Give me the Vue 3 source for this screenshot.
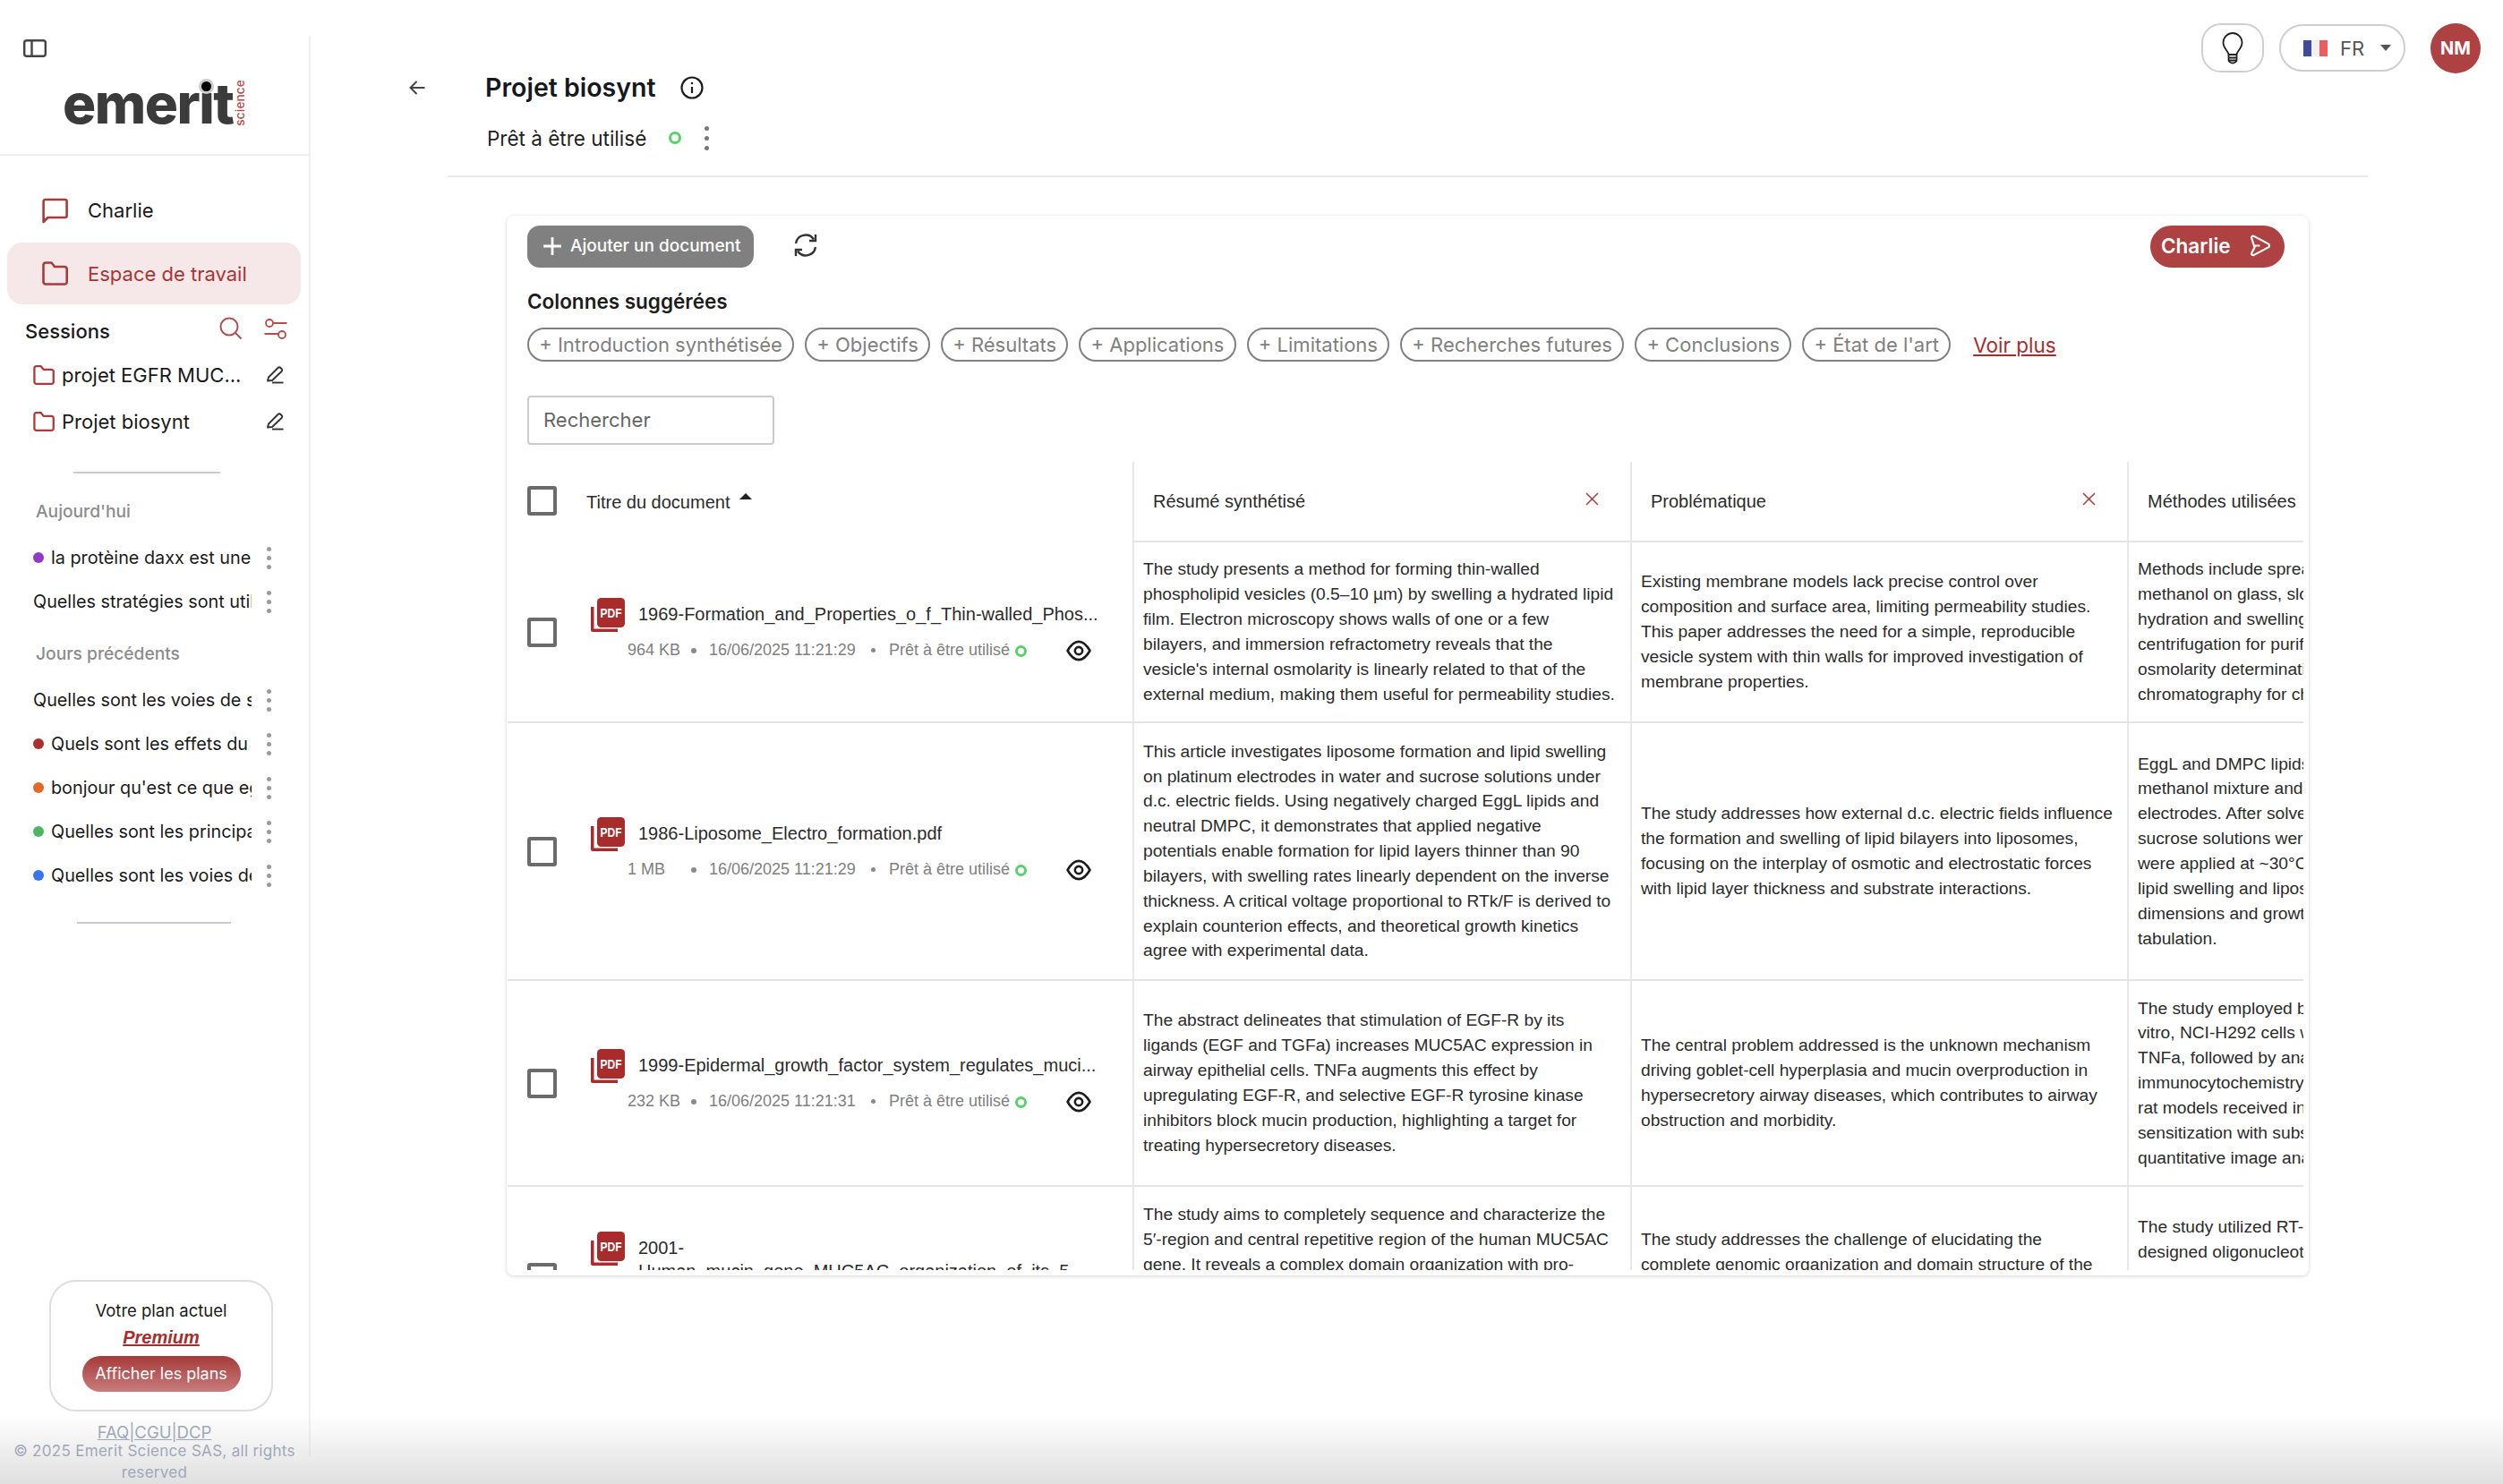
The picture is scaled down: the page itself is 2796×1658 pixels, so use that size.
<script setup>
const todayChats = [
  { text: 'la protèine daxx est une protéine', color: '#9238c8' },
  { text: 'Quelles stratégies sont utilisées', color: '' },
]
const olderChats = [
  { text: 'Quelles sont les voies de signalisation', color: '' },
  { text: 'Quels sont les effets du traitement', color: '#ab2f2f' },
  { text: "bonjour qu'est ce que egfr", color: '#e0692a' },
  { text: 'Quelles sont les principales', color: '#4fb565' },
  { text: 'Quelles sont les voies de', color: '#3b73ee' },
]
const chips = ['Introduction synthétisée', 'Objectifs', 'Résultats', 'Applications', 'Limitations', 'Recherches futures', 'Conclusions', "État de l'art"]
const rows = [
  {
    id: 'r1', h: 202, name: ['1969-Formation_and_Properties_o_f_Thin-walled_Phos...'], size: '964 KB', date: '16/06/2025 11:21:29',
    summary: ['The study presents a method for forming thin-walled', 'phospholipid vesicles (0.5–10 µm) by swelling a hydrated lipid', 'film. Electron microscopy shows walls of one or a few', 'bilayers, and immersion refractometry reveals that the', "vesicle's internal osmolarity is linearly related to that of the", 'external medium, making them useful for permeability studies.'],
    problem: ['Existing membrane models lack precise control over', 'composition and surface area, limiting permeability studies.', 'This paper addresses the need for a simple, reproducible', 'vesicle system with thin walls for improved investigation of', 'membrane properties.'],
    methods: ['Methods include spreading', 'methanol on glass, slow', 'hydration and swelling', 'centrifugation for purification', 'osmolarity determination', 'chromatography for checks'],
  },
  {
    id: 'r2', h: 288, name: ['1986-Liposome_Electro_formation.pdf'], size: '1 MB', date: '16/06/2025 11:21:29',
    summary: ['This article investigates liposome formation and lipid swelling', 'on platinum electrodes in water and sucrose solutions under', 'd.c. electric fields. Using negatively charged EggL lipids and', 'neutral DMPC, it demonstrates that applied negative', 'potentials enable formation for lipid layers thinner than 90', 'bilayers, with swelling rates linearly dependent on the inverse', 'thickness. A critical voltage proportional to RTk/F is derived to', 'explain counterion effects, and theoretical growth kinetics', 'agree with experimental data.'],
    problem: ['The study addresses how external d.c. electric fields influence', 'the formation and swelling of lipid bilayers into liposomes,', 'focusing on the interplay of osmotic and electrostatic forces', 'with lipid layer thickness and substrate interactions.'],
    methods: ['EggL and DMPC lipids in', 'methanol mixture and', 'electrodes. After solvent', 'sucrose solutions were', 'were applied at ~30°C', 'lipid swelling and liposome', 'dimensions and growth', 'tabulation.'],
  },
  {
    id: 'r3', h: 230, name: ['1999-Epidermal_growth_factor_system_regulates_muci...'], size: '232 KB', date: '16/06/2025 11:21:31',
    summary: ['The abstract delineates that stimulation of EGF-R by its', 'ligands (EGF and TGFa) increases MUC5AC expression in', 'airway epithelial cells. TNFa augments this effect by', 'upregulating EGF-R, and selective EGF-R tyrosine kinase', 'inhibitors block mucin production, highlighting a target for', 'treating hypersecretory diseases.'],
    problem: ['The central problem addressed is the unknown mechanism', 'driving goblet-cell hyperplasia and mucin overproduction in', 'hypersecretory airway diseases, which contributes to airway', 'obstruction and morbidity.'],
    methods: ['The study employed both', 'vitro, NCI-H292 cells were', 'TNFa, followed by analysis', 'immunocytochemistry', 'rat models received in', 'sensitization with subsequent', 'quantitative image analysis'],
  },
  {
    id: 'r4', h: 204, name: ['2001-', 'Human_mucin_gene_MUC5AC_organization_of_its_5_...'], size: '1 MB', date: '16/06/2025 11:21:31',
    summary: ['The study aims to completely sequence and characterize the', '5′-region and central repetitive region of the human MUC5AC', 'gene. It reveals a complex domain organization with pro-', 'line', 'line', 'line'],
    problem: ['The study addresses the challenge of elucidating the', 'complete genomic organization and domain structure of the', 'line', 'line'],
    methods: ['The study utilized RT-PCR', 'designed oligonucleotides', 'line', 'line', 'line'],
  },
]
</script>

<template>
  <div class="page">
    <aside class="side">
      <div class="brand">
        <svg class="toggle" width="26" height="20" viewBox="0 0 26 20" fill="none" stroke="#444" stroke-width="2.4">
          <rect x="1.2" y="1.2" width="23.6" height="17.6" rx="2.5" />
          <path d="M9.5 1.2v17.6" />
        </svg>
        <div class="logo">
          <span class="logo-word">emerit<i class="logo-dot"></i></span>
          <span class="logo-sub">science</span>
        </div>
      </div>

      <nav class="nav">
        <a class="nav-item">
          <svg width="29" height="29" viewBox="0 0 29 29" fill="none" stroke="#ab3a3a" stroke-width="2.6">
            <path d="M1.6 27V4a2 2 0 0 1 2-2h22a2 2 0 0 1 2 2v16a2 2 0 0 1-2 2H6.5z" stroke-linejoin="round" />
          </svg>
          <span>Charlie</span>
        </a>
        <a class="nav-item active">
          <svg width="29" height="27" viewBox="0 0 29 27" fill="none" stroke="#ab3a3a" stroke-width="2.6">
            <path d="M1.5 4a2.5 2.5 0 0 1 2.5-2.5h6.5l3.5 4.5h11a2.7 2.7 0 0 1 2.7 2.7V23a2.5 2.5 0 0 1-2.5 2.5H4A2.5 2.5 0 0 1 1.5 23z" stroke-linejoin="round" />
          </svg>
          <span>Espace de travail</span>
        </a>
      </nav>

      <div class="sessions-head">
        <span>Sessions</span>
        <svg class="sh-search" width="26" height="26" viewBox="0 0 26 26" fill="none" stroke="#b84c4c" stroke-width="2">
          <circle cx="11" cy="11" r="9.5" />
          <path d="M18 18l6.5 6.5" />
        </svg>
        <svg class="sh-sliders" width="26" height="24" viewBox="0 0 26 24" fill="none" stroke="#b84c4c" stroke-width="1.8">
          <circle cx="6" cy="5" r="4" />
          <path d="M10 5h15.500M0.500 17h15.500" />
          <circle cx="20" cy="18" r="4" />
        </svg>
      </div>
      <div class="session" v-for="s in ['projet EGFR MUC...', 'Projet biosynt']" :key="s">
        <svg width="24" height="22" viewBox="0 0 29 27" fill="none" stroke="#ab3a3a" stroke-width="2.8">
          <path d="M1.5 4a2.500 2.500 0 0 1 2.500-2.500h6.500l3.500 4.500h11a2.700 2.700 0 0 1 2.700 2.700V23a2.500 2.500 0 0 1-2.500 2.500H4A2.500 2.500 0 0 1 1.500 23z" stroke-linejoin="round" />
        </svg>
        <span class="session-name">{{ s }}</span>
        <svg width="20" height="20" viewBox="0 0 20 20" fill="none" stroke="#333" stroke-width="1.9">
          <path d="M2 16.500l1-4L13.500 2a2 2 0 0 1 3 0l1 1a2 2 0 0 1 0 3L7 16z" stroke-linejoin="round" />
          <path d="M7 18.500h12.500" />
        </svg>
      </div>

      <div class="rule rule-a"></div>
      <div class="group-label">Aujourd'hui</div>
      <div class="chat" v-for="c in todayChats" :key="c.text">
        <i v-if="c.color" class="chat-dot" :style="{ background: c.color }"></i>
        <span class="chat-text">{{ c.text }}</span>
        <span class="kebab"><i></i><i></i><i></i></span>
      </div>
      <div class="group-label later">Jours précédents</div>
      <div class="chat" v-for="c in olderChats" :key="c.text">
        <i v-if="c.color" class="chat-dot" :style="{ background: c.color }"></i>
        <span class="chat-text">{{ c.text }}</span>
        <span class="kebab"><i></i><i></i><i></i></span>
      </div>
      <div class="rule rule-b"></div>

      <div class="plan">
        <div class="plan-title">Votre plan actuel</div>
        <div class="plan-name">Premium</div>
        <button class="plan-btn">Afficher les plans</button>
      </div>
      <div class="legal">
        <a class="legal-links">FAQ|CGU|DCP</a>
        <p>© 2025 Emerit Science SAS, all rights reserved</p>
      </div>
    </aside>

    <main class="main">
      <div class="tools">
        <button class="bulb">
          <svg width="24" height="36" viewBox="0 0 24 36" fill="none" stroke="#222" stroke-width="1.800">
            <path d="M7.500 25c0-4-6-6.500-6-13.500a10.500 10.500 0 0 1 21 0c0 7-6 9.500-6 13.500z" stroke-linejoin="round" />
            <path d="M7.500 25v6.500c0 1 2 3 4.500 3s4.500-2 4.500-3V25M7.500 28.500h9M7.500 31.500h9" />
          </svg>
        </button>
        <button class="lang">
          <span class="flag"><i class="f-b"></i><i class="f-w"></i><i class="f-r"></i></span>
          <span class="lang-code">FR</span>
          <i class="caret"></i>
        </button>
        <div class="avatar">NM</div>
      </div>

      <div class="title-row">
        <svg class="back" width="18" height="18" viewBox="0 0 18 18" fill="none" stroke="#444" stroke-width="2">
          <path d="M17.500 9H1.500M8.500 2L1.500 9l7 7" />
        </svg>
        <h1>Projet biosynt</h1>
        <svg class="info" width="26" height="26" viewBox="0 0 26 26" fill="none" stroke="#1c1c1c" stroke-width="2.200">
          <circle cx="13" cy="13" r="11.500" />
          <path d="M13 12v7" />
          <circle cx="13" cy="8" r="1.300" fill="#1c1c1c" stroke="none" />
        </svg>
      </div>
      <div class="status-row">
        <span>Prêt à être utilisé</span>
        <i class="ring"></i>
        <span class="kebab dark"><i></i><i></i><i></i></span>
      </div>
      <div class="head-rule"></div>

      <section class="card">
        <div class="card-top">
          <button class="add">
            <svg width="20" height="20" viewBox="0 0 20 20" stroke="#fff" stroke-width="2.800"><path d="M10 0v20M0 10h20" /></svg>
            Ajouter un document
          </button>
          <svg class="refresh" width="28" height="28" viewBox="0 0 28 28" fill="none" stroke="#333" stroke-width="2.400">
            <path d="M3 12a11 11 0 0 1 20-4.500M25 16a11 11 0 0 1-20 4.500" />
            <path d="M25 2v7h-7M3 26v-7h7" stroke-width="2.400" />
          </svg>
          <button class="go">
            Charlie
            <svg width="25" height="25" viewBox="0 0 25 25" fill="none" stroke="#fff" stroke-width="2.200">
              <path d="M3 3.500c0-1.500 1.300-2.300 2.800-1.600l16 8.500c1.600 1 1.600 3 0 4l-16 8.500c-1.500.7-2.800-.1-2.800-1.600l3.500-6.800-3.500-11zM6.500 12.500h6" stroke-linejoin="round" />
            </svg>
          </button>
        </div>
        <div class="suggest-label">Colonnes suggérées</div>
        <div class="chips">
          <span class="chip" v-for="c in chips" :key="c">+ {{ c }}</span>
          <a class="more">Voir plus</a>
        </div>
        <input class="search" placeholder="Rechercher" />

        <div class="table">
          <div class="row head">
            <div class="cell first">
              <i class="check up"></i>
              <span class="th-title">Titre du document</span>
              <i class="sort"></i>
            </div>
            <div class="cell th">
              <span>Résumé synthétisé</span>
              <svg class="x" width="15" height="15" viewBox="0 0 15 15" stroke="#b03a3a" stroke-width="1.500"><path d="M1 1l13 13M14 1L1 14" /></svg>
            </div>
            <div class="cell th">
              <span>Problématique</span>
              <svg class="x" width="15" height="15" viewBox="0 0 15 15" stroke="#b03a3a" stroke-width="1.500"><path d="M1 1l13 13M14 1L1 14" /></svg>
            </div>
            <div class="cell th plain"><span>Méthodes utilisées</span></div>
          </div>

          <div class="row body" v-for="r in rows" :key="r.id" :style="{ height: r.h + 'px' }">
            <div class="cell first">
              <i class="check"></i>
              <div class="doc">
                <div class="doc-name">
                  <svg class="pdf" width="38" height="38" viewBox="0 0 38 38">
                    <path d="M0 10h3.500v24.500H30V38H2a2 2 0 0 1-2-2z" fill="#a82c2c" />
                    <rect x="7" y="0" width="31" height="33" rx="4.500" fill="#a82c2c" />
                    <text x="22.500" y="22" font-family="Liberation Sans, sans-serif" font-size="15" font-weight="700" fill="#fff" text-anchor="middle" textLength="24" lengthAdjust="spacingAndGlyphs">PDF</text>
                  </svg>
                  <div class="doc-lines">
                    <div v-for="n in r.name" :key="n">{{ n }}</div>
                  </div>
                </div>
                <div class="meta">
                  <span class="m-size">{{ r.size }}</span>
                  <i class="m-dot"></i>
                  <span class="m-date">{{ r.date }}</span>
                  <i class="m-dot"></i>
                  <span class="m-status">Prêt à être utilisé</span>
                  <i class="ring small"></i>
                  <svg class="eye" width="28" height="24" viewBox="0 0 30 26" fill="none" stroke="#1c1c1c" stroke-width="2.800">
                    <path d="M1.500 13C6 5 10 2 15 2s9 3 13.500 11C24 21 20 24 15 24S6 21 1.500 13z" stroke-linejoin="round" />
                    <circle cx="15" cy="13" r="4.500" />
                  </svg>
                </div>
              </div>
            </div>
            <div class="cell text"><div><div v-for="(l, i) in r.summary" :key="i" class="line">{{ l }}</div></div></div>
            <div class="cell text"><div><div v-for="(l, i) in r.problem" :key="i" class="line">{{ l }}</div></div></div>
            <div class="cell text"><div><div v-for="(l, i) in r.methods" :key="i" class="line">{{ l }}</div></div></div>
          </div>
        </div>
      </section>
    </main>

    <div class="fade"></div>
  </div>
</template>

<style>
html, body { margin: 0; background: #fff; }
</style>

<style scoped>
.page {
  position: relative; width: 2796px; height: 1658px; overflow: hidden; display: flex;
  background: #fff; font-family: Inter, "Liberation Sans", sans-serif; color: #1a1a1a;
}
i { display: block; font-style: normal; }
button { font-family: inherit; cursor: pointer; }

/* sidebar */
.side { width: 345px; height: 1588px; margin-top: 40px; border-right: 2px solid #eeeff3; display: flex; flex-direction: column; flex: none; }
.brand { position: relative; height: 134px; box-sizing: border-box; border-bottom: 2px solid #edeff5; }
.toggle { position: absolute; left: 26px; top: 4px; }
.logo { position: absolute; left: 70px; top: 45px; display: flex; align-items: flex-end; }
.logo-word { position: relative; font-size: 62px; line-height: 62px; font-weight: 800; letter-spacing: -1.500px; color: #3b3b3b; }
.logo-dot { position: absolute; left: 155px; top: 6px; width: 11px; height: 11px; border-radius: 50%; background: #000; box-shadow: 0 0 0 3px #ccc; }
.logo-sub { writing-mode: vertical-rl; transform: rotate(180deg); font-size: 13.500px; line-height: 11px; color: #b84a4a; font-weight: 500; margin: 0 0 6px 3px; letter-spacing: .2px; }
.nav { margin-top: 27px; display: flex; flex-direction: column; gap: 2px; padding: 0 9px 0 8px; }
.nav-item { height: 68px; border-radius: 17px; display: flex; align-items: center; gap: 22px; padding-left: 39px; font-size: 22px; }
.nav-item.active { background: #f6e8e9; color: #a93535; height: 69px; }
.sessions-head { height: 40px; margin-top: 10px; display: flex; align-items: center; padding-left: 28px; font-size: 22px; font-weight: 500; }
.sh-search { margin-left: 122px; margin-top: -6px; }
.sh-sliders { margin-left: 24px; margin-top: -4px; }
.session { height: 52px; display: flex; align-items: center; padding-left: 37px; font-size: 22px; }
.session-name { width: 217px; margin-left: 8px; white-space: nowrap; overflow: hidden; padding-top: 5px; }
.session svg { margin-top: 5px; }
.session svg:last-child { margin-left: 11px; }
.rule { height: 2px; background: #c9c9d2; }
.rule-a { width: 164px; margin: 33px 0 28px 82px; }
.rule-b { width: 172px; margin: 28px 0 0 86px; }
.group-label { height: 28px; line-height: 28px; padding-left: 40px; font-size: 19.200px; font-weight: 500; color: #8c8c8c; margin-bottom: 13px; }
.group-label.later { margin-top: 20px; }
.chat { height: 49px; display: flex; align-items: center; padding-left: 37px; font-size: 19.800px; position: relative; }
.chat-dot { width: 12px; height: 12px; border-radius: 50%; margin-right: 8px; flex: none; }
.chat-text { flex: 1; min-width: 0; white-space: nowrap; overflow: hidden; margin-right: 64px; }
.kebab { position: absolute; left: 298px; top: 13px; display: flex; flex-direction: column; gap: 5px; }
.kebab i { width: 5px; height: 5px; border-radius: 50%; background: #9a9a9a; }
.plan { width: 250px; height: 147px; box-sizing: border-box; margin: auto 0 0 55px; border: 2px solid #dedede; border-radius: 30px; text-align: center; padding-top: 19px; flex: none; }
.plan-title { font-size: 18.500px; line-height: 26px; }
.plan-name { font-family: "Liberation Sans", sans-serif; font-weight: 700; font-style: italic; text-decoration: underline; color: #a82c2c; font-size: 20px; line-height: 30px; margin-top: 2px; }
.plan-btn { width: 177px; height: 40px; margin-top: 6px; border: 0; border-radius: 20px; background: linear-gradient(#a63a3a, #c97c7c); color: #fff; font-size: 18px; padding: 0 0 2px; }
.legal { color: #9fa8ba; font-size: 17px; line-height: 24px; text-align: center; height: 51px; box-sizing: border-box; padding-top: 11px; flex: none; position: relative; z-index: 1; }
.legal-links { display: block; text-decoration: underline; font-size: 18.500px; line-height: 24px; }
.legal p { margin: -3px 0 0; padding: 0 8px; letter-spacing: .3px; }

/* main */
.main { flex: 1; min-width: 0; display: flex; flex-direction: column; padding-top: 26px; }
.tools { height: 55px; display: flex; align-items: center; justify-content: flex-end; padding-right: 25px; }
.bulb { width: 70px; height: 55px; border: 2px solid #cfcfcf; border-radius: 22px; background: #fff; display: flex; align-items: center; justify-content: center; padding: 0; }
.lang { width: 141px; height: 53px; margin-left: 17px; border: 2px solid #cfcfcf; border-radius: 26px; background: #fff; display: flex; align-items: center; padding: 0 0 0 25px; }
.flag { display: flex; width: 27px; height: 18px; }
.flag i { flex: 1; }
.f-b { background: #3f4a9e; } .f-w { background: #f1f1f3; } .f-r { background: #f05b5b; }
.lang-code { margin-left: 14px; font-size: 22px; color: #555; }
.caret { margin-left: 18px; border: 6.500px solid transparent; border-top: 7px solid #555; border-bottom: 0; }
.avatar { width: 56px; height: 56px; margin-left: 28px; border-radius: 50%; background: #ae4242; color: #fff; font-weight: 700; font-size: 20px; display: flex; align-items: center; justify-content: center; }
.title-row { height: 34px; display: flex; align-items: center; padding-left: 110px; }
.title-row h1 { margin: 0 0 0 67px; font-size: 28.500px; line-height: 34px; font-weight: 600; color: #15181f; white-space: nowrap; }
.info { margin-left: 27px; }
.status-row { height: 40px; margin-top: 19px; display: flex; align-items: center; padding-left: 197px; font-size: 22.500px; position: relative; color: #222; }
.ring { width: 14px; height: 14px; box-sizing: border-box; border: 3px solid #5ad06a; border-radius: 50%; margin-left: 25px; }
.kebab.dark { position: static; margin-left: 26px; gap: 6px; }
.kebab.dark i { background: #777; }
.head-rule { height: 2px; margin: 22px 151px 0 153px; background: #e8e8e8; }
.card { width: 2013px; height: 1184px; box-sizing: border-box; margin: 43px 0 0 219px; border-radius: 8px; box-shadow: 0 1px 4px rgba(0,0,0,.16), 0 0 2px rgba(0,0,0,.04); padding: 11px 0 0 23px; position: relative; }
.card-top { height: 47px; display: flex; align-items: center; padding-right: 27px; }
.add { width: 253px; height: 47px; border: 0; border-radius: 14px; background: #808080; color: #fff; font-size: 19px; font-weight: 500; display: flex; align-items: center; gap: 10px; padding: 0 0 2px 18px; white-space: nowrap; }
.refresh { margin-left: 44px; margin-top: -3px; }
.go { margin-left: auto; width: 150px; height: 47px; border: 0; border-radius: 24px; background: #ae4242; color: #fff; font-size: 22.500px; font-weight: 600; display: flex; align-items: center; padding: 0 0 2px 12px; gap: 20px; }
.suggest-label { margin-top: 24px; font-size: 22.500px; line-height: 28px; font-weight: 600; color: #1c1c1c; }
.chips { display: flex; align-items: center; gap: 12px; margin-top: 15px; }
.chip { height: 38px; box-sizing: border-box; border: 2px solid #808080; border-radius: 19px; padding: 0 11.200px; font-size: 22px; line-height: 34px; color: #808080; white-space: nowrap; }
.more { margin-left: 13px; color: #a82c2c; text-decoration: underline; font-size: 22.500px; }
.search { display: block; box-sizing: border-box; width: 276px; height: 55px; margin-top: 38px; border: 2px solid #cccccc; border-radius: 4px; padding: 0 16px 2px; font: 22px Inter, sans-serif; outline: 0; }
.search::placeholder { color: #666; opacity: 1; }

.table { width: 2006px; height: 903px; margin: 19px 0 0 -22px; overflow: hidden; font-family: "Liberation Sans", Arial, sans-serif; font-size: 20px; color: #2b2b2b; }
.row { display: grid; grid-template-columns: 698px 556px 555px 320px; }
.row.head { height: 90px; }
.row.body { border-bottom: 2px solid #e4e4e4; box-sizing: border-box; }
.cell { display: flex; align-items: center; box-sizing: border-box; min-width: 0; }
.first { padding-left: 22px; }
.th { border-left: 2px solid #e8e8e8; border-bottom: 2px solid #e4e4e4; padding: 0 21px; justify-content: space-between; }
.th.plain { justify-content: flex-start; }
.th span { margin-top: 1px; white-space: nowrap; }
.check { width: 33px; height: 33px; box-sizing: border-box; border: 4px solid #6b6b6b; border-radius: 3px; flex: none; }
.check.up { margin-top: -4px; }
.th-title { margin-left: 33px; }
.sort { margin: -14px 0 0 11px; border: 7px solid transparent; border-bottom: 7px solid #222; border-top: 0; }
.x { margin: -5px 14px 0 0; }
.doc { margin-left: 38px; flex: 1; min-width: 0; }
.doc-name { display: flex; }
.pdf { flex: none; margin: -5px 0 -7px; }
.doc-lines { margin-left: 15px; line-height: 26px; white-space: nowrap; width: 520px; overflow: hidden; }
.meta { display: flex; align-items: center; height: 26px; margin-top: 15px; padding-left: 41px; font-size: 18px; color: #808080; }
.m-size { width: 71px; white-space: nowrap; }
.m-dot { width: 6px; height: 6px; border-radius: 50%; background: #8a8a8a; flex: none; }
.m-date { margin-left: 14px; white-space: nowrap; width: 164px; flex: none; }
.m-date + .m-dot { margin-left: 17px; width: 5px; height: 5px; }
.m-status { margin-left: 15px; white-space: nowrap; width: 135px; flex: none; }
.ring.small { width: 13px; height: 13px; margin: 2px 0 0 6px; flex: none; }
.eye { margin-left: 44px; flex: none; }
.text { border-left: 2px solid #e8e8e8; padding: 0 0 0 10px; line-height: 27.840px; font-size: 19.200px; }
.line { white-space: nowrap; }

.fade { position: absolute; left: 0; right: 0; bottom: 0; height: 78px; background: linear-gradient(rgba(222,222,222,0), rgba(222,222,222,.95)); pointer-events: none; }
</style>
